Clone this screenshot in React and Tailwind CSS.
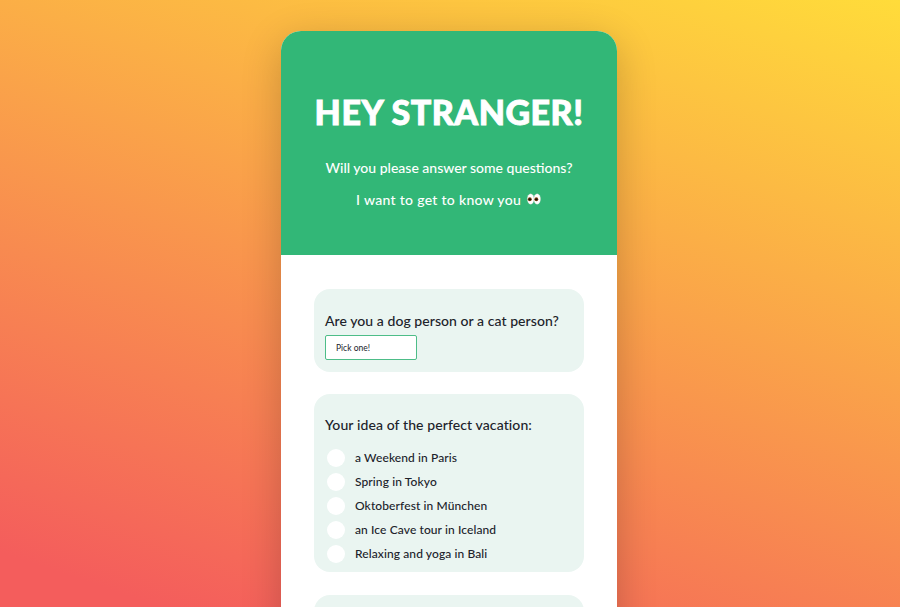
function Eyes() {
  return (
    <svg width="16" height="12" viewBox="0 0 17 14" className="inline-block align-[0px] ml-[1px]" aria-hidden="true">
      <ellipse cx="4.6" cy="7" rx="3.9" ry="6" fill="#fff" stroke="#d9d3cf" strokeWidth="0.4" />
      <ellipse cx="12.2" cy="7" rx="3.9" ry="6" fill="#fff" stroke="#d9d3cf" strokeWidth="0.4" />
      <circle cx="3.6" cy="7.4" r="2.3" fill="#8a4a12" />
      <circle cx="3.6" cy="7.4" r="1.4" fill="#111" />
      <circle cx="11.2" cy="7.4" r="2.3" fill="#8a4a12" />
      <circle cx="11.2" cy="7.4" r="1.4" fill="#111" />
    </svg>
  );
}

const options = [
  "a Weekend in Paris",
  "Spring in Tokyo",
  "Oktoberfest in München",
  "an Ice Cave tour in Iceland",
  "Relaxing and yoga in Bali",
];

export default function App() {
  return (
    <div className="h-[607px] overflow-hidden flex justify-center pr-[2px] pt-[31px] bg-[linear-gradient(19deg,#f45d5c_6%,#ffdc3a_100%)] font-['Lato','Noto_Sans',sans-serif]">
      <div className="w-[336px] shrink-0 self-start rounded-t-[20px] overflow-hidden bg-white shadow-[0_10px_40px_rgba(0,0,0,0.2)]">
        <header className="h-[224px] bg-[#32b777] text-white text-center pt-[61px]">
          <h1 className="text-[34px] leading-[40px] font-black tracking-[0.5px] [-webkit-text-stroke:0.9px_#fff]">HEY STRANGER!</h1>
          <p className="mt-[24px] text-[14px] leading-[24px] font-medium">Will you please answer some questions?</p>
          <p className="mt-[8px] text-[14px] leading-[24px] font-medium tracking-[0.3px]">
            I want to get to know you <Eyes />
          </p>
        </header>
        <div className="px-[33px] pt-[34px] pb-10 flex flex-col text-[#20222a]">
          <section className="h-[83px] rounded-[16px] bg-[#eaf5f1] px-[11px] pt-[22px]">
            <p className="text-[14px] leading-[20px] font-medium tracking-[0.06px] whitespace-nowrap">Are you a dog person or a cat person?</p>
            <div className="mt-[4px] w-[92px] h-[25px] rounded-[2px] border border-[#4dbd88] bg-white pl-[10px] text-[8.5px] leading-[24px]">Pick one!</div>
          </section>
          <section className="mt-[22px] h-[178px] rounded-[16px] bg-[#eaf5f1] px-[11px] pt-[21px]">
            <p className="text-[14px] leading-[20px] font-medium tracking-[0.1px]">Your idea of the perfect vacation:</p>
            <ul className="mt-[14px] flex flex-col gap-[6px]">
              {options.map((o) => (
                <li key={o} className="flex items-center h-[18px] text-[12px] leading-[18px] font-medium tracking-[0.1px]">
                  <span className="ml-[2px] w-[18px] h-[18px] rounded-full bg-white shrink-0" />
                  <span className="ml-[10px]">{o}</span>
                </li>
              ))}
            </ul>
          </section>
          <section className="mt-[23px] h-[120px] rounded-[16px] bg-[#eaf5f1]" />
        </div>
      </div>
    </div>
  );
}
